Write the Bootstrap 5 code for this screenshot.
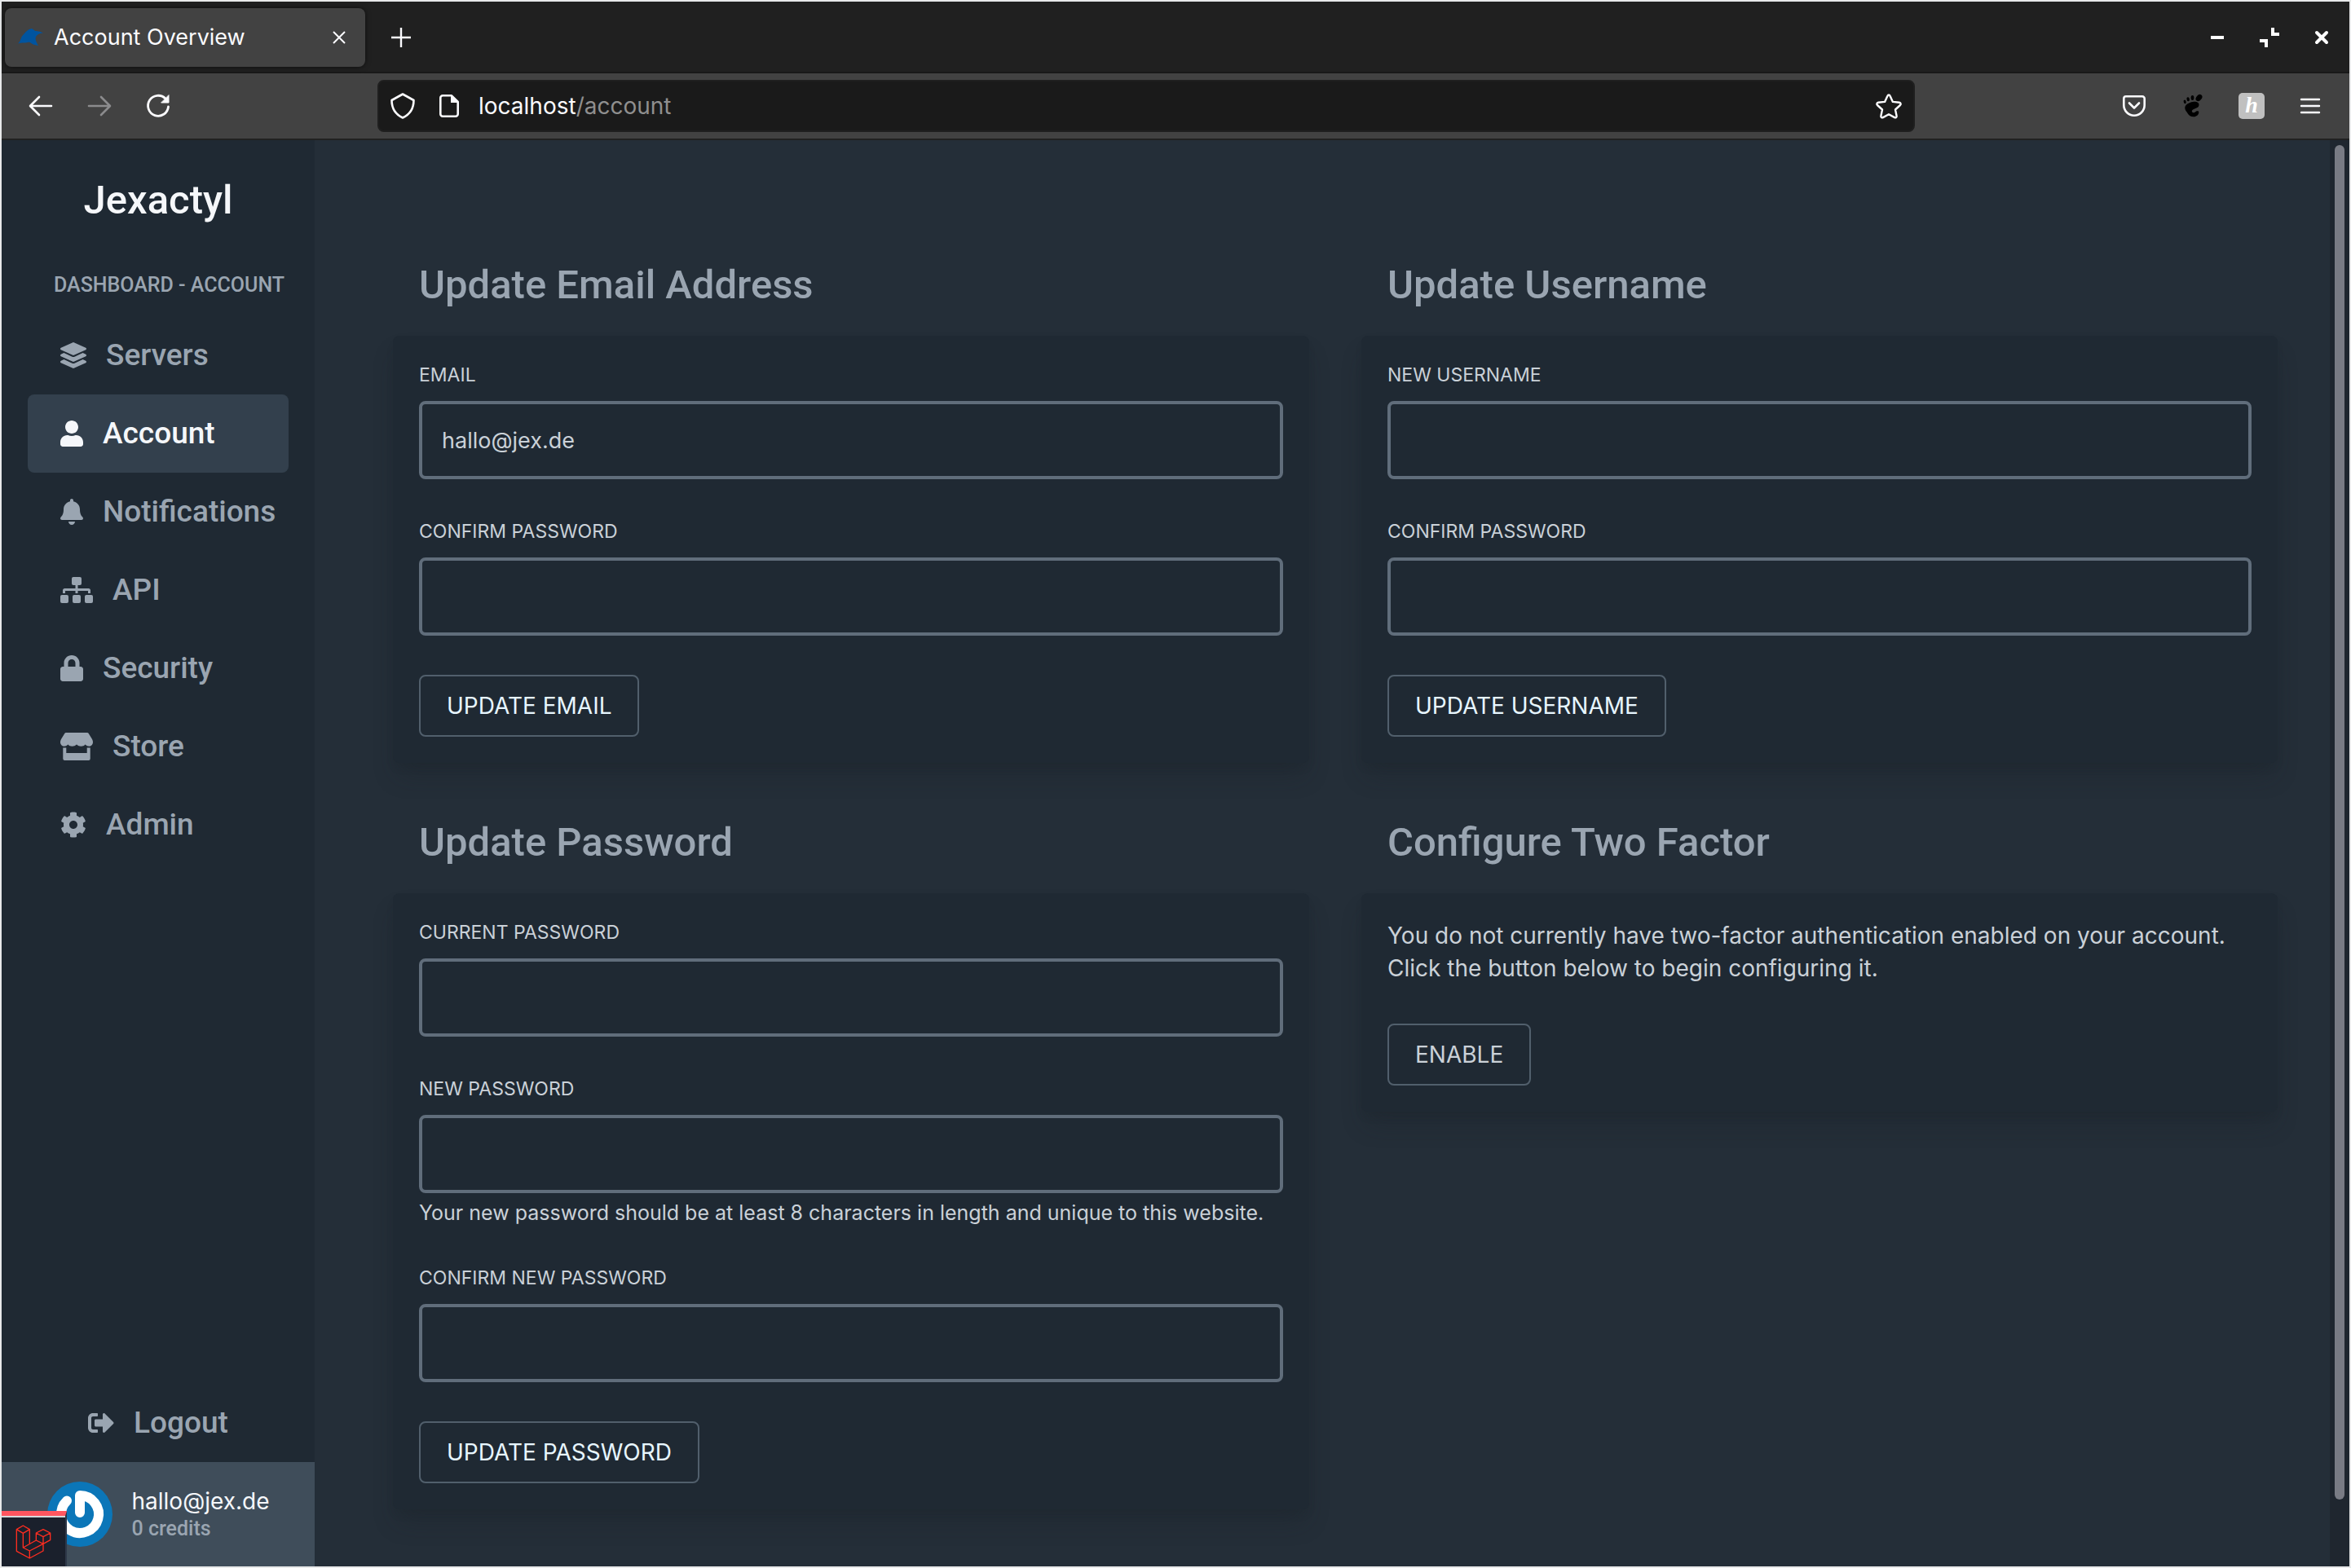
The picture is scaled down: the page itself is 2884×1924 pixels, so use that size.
<!DOCTYPE html>
<html lang="en">
<head>
<meta charset="utf-8">
<meta name="viewport" content="width=device-width, initial-scale=1">
<title>Account Overview</title>
<link href="https://cdn.jsdelivr.net/npm/bootstrap@5.3.0/dist/css/bootstrap.min.css" rel="stylesheet">
<script src="https://cdn.jsdelivr.net/npm/bootstrap@5.3.0/dist/js/bootstrap.bundle.min.js" defer></script>
<style>
:root {
  --ink-900: #1f2933;
  --ink-850: #242e38;
  --ink-700: #33404d;
  --ink-600: #3f4d5a;
  --ink-500: #606d7b;
  --ink-300: #9aa5b1;
  --ink-200: #cad1d8;
  --ink-50: #f5f7fa;
}
body {
  font-family: Inter, "Noto Sans", sans-serif;
  font-size: 28px;
  line-height: 40px;
  color: var(--ink-200);
  background: var(--ink-850);
}
.plex { font-family: Roboto, "Noto Sans", sans-serif; font-weight: 500; }
.window { min-height: 100vh; border: 2px solid #e8e9ea; }
svg { display: block; flex-shrink: 0; overflow: visible; }

/* browser chrome */
.tabstrip { background: #202020; height: 88px; border-bottom: 2px solid #191919; padding: 2px 2px 0 4px; }
.tab { background: #424242; width: 442px; height: 72px; border-radius: 8px; padding: 0 24px 0 16px; box-shadow: 0 0 6px rgba(0,0,0,.6); color: #fbfbfe; font-size: 27px; gap: 12px; }
.chrome-btn { background: none; border: 0; padding: 0; height: 64px; color: #fbfbfe; display: flex; align-items: center; justify-content: center; }
.new-tab { margin-left: 12px; }
.w64 { width: 64px; }
.w72 { width: 72px; }
.toolbar { background: #424242; height: 82px; border-bottom: 2px solid #212121; padding: 0 12px; color: #fbfbfe; }
.urlbar { background: #1a1a1a; height: 64px; border-radius: 8px; margin: 0 233px; padding: 0 14px; border: 2px solid #1f1f1f; font-size: 28px; }
.urlbar .page-icon { margin: 0 24px 0 30px; }
.urlbar .path { color: #8f8f8f; }
.honey { width: 32px; height: 32px; border-radius: 5px; background: #c0c0c0; color: #fff; font: italic bold 28px/30px "Liberation Serif", serif; }

/* sidebar */
.side { background: var(--ink-900); width: 384px; flex-shrink: 0; }
.brand { font-size: 49px; line-height: 64px; color: var(--ink-50); padding-top: 42px; }
.crumb { font-size: 25px; line-height: 32px; color: var(--ink-300); padding: 56px 0 22px 64px; }
.side-nav { padding: 0 32px; }
.side-link { height: 96px; padding: 0 40px; gap: 24px; border-radius: 8px; font-size: 37px; line-height: 48px; color: var(--ink-300); text-decoration: none; white-space: nowrap; }
.side-link:hover, .side-link.active { color: var(--ink-50); }
.side-link.active { background: var(--ink-700); }
.profile { background: var(--ink-600); height: 128px; gap: 24px; }
.profile .mail { font-size: 28px; line-height: 36px; color: var(--ink-50); }
.profile .credits { font-size: 25px; line-height: 32px; color: var(--ink-300); }
.debugbar { left: 0; bottom: 0; width: 80px; height: 68px; background: #1a202c; border-top: 6px solid #ff5660; border-right: 2px solid #2d3748; }
.debugbar span { border-top: 2px solid #d5d8dc; }

/* content */
.page { padding: 144px 64px 68px 96px; }
.grid-cards { --bs-gutter-x: 64px; --bs-gutter-y: 64px; }
.sec-title { font-size: 49px; line-height: 68px; margin: 0 0 28px; padding: 0 32px; color: var(--ink-300); }
.panel { background: var(--ink-900); border-radius: 8px; padding: 32px; box-shadow: 0 20px 30px -6px rgba(25,33,41,.3), 0 8px 12px -4px rgba(25,33,41,.2); }
.field { margin-bottom: 48px; }
.field label { display: block; font-size: 23px; line-height: 32px; margin-bottom: 16px; text-transform: uppercase; }
.field .form-control { height: 96px; border: 4px solid var(--ink-500); border-radius: 8px; background: var(--ink-900); color: var(--ink-200); font-size: 27px; padding: 0 24px; }
.field .form-control:focus { box-shadow: none; border-color: #7b8794; }
.field .hint { font-size: 25px; line-height: 32px; margin: 8px 0 0; }
.panel .btn { height: 76px; padding: 0 32px; border: 2px solid #515f6c; border-radius: 8px; color: #e7f6ff; font-size: 28px; line-height: 40px; text-transform: uppercase; }
.panel .btn.dim { color: var(--ink-200); }

.scroll { background: #1f262f; width: 24px; flex-shrink: 0; padding: 6px 6px 82px; }
.scroll div { background: #797b84; border-radius: 6px; width: 12px; }
</style>
</head>
<body>
<div class="window d-flex flex-column">
  <header>
    <div class="tabstrip d-flex align-items-center">
      <div class="tab d-flex align-items-center">
        <svg width="32" height="22" viewBox="0 0 32 22" fill="#00549f"><path d="M17 0l3 2c1 2 5 0 11 3.500-4 0-7 1.500-9 4.500-1 3 0 6 3 11-3-1-6-1-8-2.500-2-1.500-3-2-5-1.500-4 1-8 0-12 1.500 2-2 3-4 4-7 1-3 3-4 4-5.500C10 4 12 1 17 0z"/></svg>
        <span class="flex-grow-1">Account Overview</span>
        <button class="chrome-btn" type="button" aria-label="Close tab"><svg width="16" height="16" viewBox="0 0 16 16" stroke="currentColor" stroke-width="2"><path d="M1 1l14 14M15 1 1 15"/></svg></button>
      </div>
      <button class="chrome-btn w64 new-tab" type="button" aria-label="New tab"><svg width="24" height="24" viewBox="0 0 24 24" stroke="currentColor" stroke-width="2.4"><path d="M12 0v24M0 12h24"/></svg></button>
      <div class="d-flex ms-auto">
        <button class="chrome-btn w64" type="button" aria-label="Minimize"><svg width="16" height="4" fill="#fff"><path d="M0 0h16v4H0z"/></svg></button>
        <button class="chrome-btn w64" type="button" aria-label="Restore"><svg width="24" height="24" fill="none" stroke="#fff" stroke-width="4"><path d="M16 0v8h8M0 16h8v8"/></svg></button>
        <button class="chrome-btn w64" type="button" aria-label="Close"><svg width="16" height="16" stroke="#fff" stroke-width="4" stroke-linecap="round"><path d="M2 2l12 12M14 2 2 14"/></svg></button>
      </div>
    </div>
    <div class="toolbar d-flex align-items-center">
      <button class="chrome-btn w72" type="button" aria-label="Back"><svg width="28" height="24" fill="none" stroke="currentColor" stroke-width="2.6" stroke-linecap="round" stroke-linejoin="round"><path d="M27 12H2M12 1 1 12l11 11"/></svg></button>
      <button class="chrome-btn w72" type="button" aria-label="Forward" disabled><svg width="28" height="24" fill="none" stroke="#8b8b8d" stroke-width="2.6" stroke-linecap="round" stroke-linejoin="round"><path d="M1 12h25M16 1l11 11-11 11"/></svg></button>
      <button class="chrome-btn w72" type="button" aria-label="Reload"><svg width="28" height="28" fill="none" stroke="currentColor" stroke-width="2.8" stroke-linecap="round"><path d="M23 5A12.500 12.500 0 1 0 26.500 15"/><path d="M27 1v9h-9z" fill="currentColor" stroke-width="1"/></svg></button>
      <div class="urlbar d-flex align-items-center flex-grow-1">
        <svg width="30" height="32" fill="none" stroke="currentColor" stroke-width="2.6" stroke-linejoin="round"><path d="M15 1.500 28.500 9c0 10-4 17-13.500 21.500C5.500 26 1.500 19 1.500 9z"/></svg>
        <svg class="page-icon" width="24" height="28" fill="none" stroke="currentColor" stroke-width="2.6" stroke-linejoin="round"><path d="M4 1.300h11L22.700 9v15a2.700 2.700 0 0 1-2.700 2.700H4A2.700 2.700 0 0 1 1.300 24V4A2.700 2.700 0 0 1 4 1.300z"/><path d="M14 1v9h9z" fill="currentColor" stroke="none"/></svg>
        <span class="flex-grow-1">localhost<span class="path">/account</span></span>
        <svg width="32" height="30" viewBox="0 0 32 30" fill="none" stroke="currentColor" stroke-width="2.4" stroke-linejoin="round"><path d="M16 1.500c.8 0 1.300.5 1.600 1.200l3.300 7.200 8 .9c1.800.2 2.300 2 1.100 3.200l-6 5.500 1.600 7.800c.3 1.600-1.100 2.600-2.500 1.800L16 25.200 8.900 29.100c-1.400.8-2.800-.2-2.500-1.800L8 19.500l-6-5.500c-1.200-1.200-.7-3 1.100-3.200l8-.9 3.300-7.200c.3-.7.8-1.200 1.600-1.200z"/></svg>
      </div>
      <button class="chrome-btn w72" type="button" aria-label="Save to Pocket"><svg width="28" height="26" fill="none" stroke="currentColor" stroke-width="2.6" stroke-linecap="round" stroke-linejoin="round"><path d="M4 1.300h20a2.700 2.700 0 0 1 2.700 2.700v8a12.700 12.700 0 0 1-25.400 0V4A2.700 2.700 0 0 1 4 1.300z"/><path d="M8 9.500l6 6 6-6"/></svg></button>
      <button class="chrome-btn w72" type="button" aria-label="GNOME Shell"><svg width="24" height="28" viewBox="0 0 24 28" fill="#000"><ellipse cx="19.500" cy="4" rx="3.300" ry="4.600" transform="rotate(40 19.500 4)"/><ellipse cx="11.500" cy="4" rx="1.900" ry="3"/><ellipse cx="6.200" cy="5.800" rx="1.700" ry="2.600" transform="rotate(-10 6 6)"/><ellipse cx="2.200" cy="9" rx="1.500" ry="2.400" transform="rotate(-15 2 9)"/><path d="M12 9c4-.6 7.500.5 7.500 3.500 0 3.500-3.500 4-6.500 5.500-2 1-3 2.500-1.500 3.800 1.200 1 2.300.4 3.500-.3 1-1.500 4.500-2 4.300.3C19 25 16.500 27.300 13 27.300c-3.500 0-6-1.500-7.500-4.300C4 20.500 2.500 19.500 2.300 16.500 2.300 12.500 7 9.700 12 9z"/></svg></button>
      <button class="chrome-btn w72" type="button" aria-label="Honey"><span class="honey">h</span></button>
      <button class="chrome-btn w72" type="button" aria-label="Menu"><svg width="24" height="20" stroke="currentColor" stroke-width="2.400" stroke-linecap="round"><path d="M1 2h22M1 10h22M1 18h22"/></svg></button>
    </div>
  </header>

  <div class="d-flex flex-grow-1">
    <aside class="side d-flex flex-column position-relative">
      <div class="brand plex text-center">Jexactyl</div>
      <div class="crumb plex text-nowrap">DASHBOARD - ACCOUNT</div>
      <nav class="side-nav d-flex flex-column">
        <a class="side-link plex d-flex align-items-center" href="#"><svg width="32" height="32" viewBox="0 0 512 512" fill="currentColor"><path d="M12.410 148.020l232.940 105.670c6.800 3.090 14.490 3.090 21.290 0l232.940-105.670c16.550-7.510 16.550-32.520 0-40.030L266.650 2.310a25.607 25.607 0 0 0-21.290 0L12.410 107.980c-16.550 7.510-16.550 32.530 0 40.040zm487.180 88.280l-58.090-26.330-161.640 73.270c-7.560 3.430-15.590 5.170-23.860 5.170s-16.290-1.740-23.860-5.170L70.510 209.970l-58.100 26.330c-16.550 7.500-16.550 32.500 0 40l232.940 105.590c6.800 3.080 14.490 3.080 21.290 0L499.590 276.300c16.550-7.500 16.550-32.500 0-40zm0 127.800l-57.870-26.230-161.860 73.370c-7.560 3.430-15.590 5.170-23.860 5.170s-16.290-1.740-23.860-5.170L70.290 337.870 12.410 364.100c-16.550 7.500-16.550 32.500 0 40l232.940 105.590c6.800 3.080 14.490 3.080 21.290 0L499.590 404.100c16.550-7.500 16.550-32.500 0-40z"/></svg>Servers</a>
        <a class="side-link plex active d-flex align-items-center" href="#" aria-current="page"><svg width="28" height="32" viewBox="0 0 448 512" fill="currentColor"><path d="M224 256c70.700 0 128-57.300 128-128S294.700 0 224 0 96 57.300 96 128s57.300 128 128 128zm89.600 32h-16.700c-22.200 10.200-46.900 16-72.900 16s-50.600-5.800-72.900-16h-16.700C60.200 288 0 348.200 0 422.400V464c0 26.500 21.500 48 48 48h352c26.500 0 48-21.500 48-48v-41.600c0-74.200-60.200-134.400-134.400-134.400z"/></svg>Account</a>
        <a class="side-link plex d-flex align-items-center" href="#"><svg width="28" height="32" viewBox="0 0 448 512" fill="currentColor"><path d="M224 512c35.320 0 63.970-28.650 63.970-64H160.030c0 35.350 28.650 64 63.970 64zm215.390-149.710c-19.320-20.760-55.470-51.990-55.470-154.290 0-77.700-54.480-139.900-127.940-155.160V32c0-17.670-14.320-32-31.980-32s-31.980 14.330-31.980 32v20.840C118.560 68.100 64.080 130.300 64.080 208c0 102.300-36.150 133.530-55.470 154.290-6 6.450-8.660 14.160-8.610 21.710.11 16.400 12.980 32 32.100 32h383.800c19.120 0 32-15.600 32.100-32 .05-7.550-2.610-15.270-8.610-21.710z"/></svg>Notifications</a>
        <a class="side-link plex d-flex align-items-center" href="#"><svg width="40" height="32" viewBox="0 0 40 32" fill="currentColor"><rect x="14" width="12" height="10" rx="2"/><rect y="22" width="10" height="10" rx="2"/><rect x="15" y="22" width="10" height="10" rx="2"/><rect x="30" y="22" width="10" height="10" rx="2"/><path d="M20 9v11M4.500 20v-3.500a1 1 0 0 1 1-1h29a1 1 0 0 1 1 1V20" fill="none" stroke="currentColor" stroke-width="3"/></svg>API</a>
        <a class="side-link plex d-flex align-items-center" href="#"><svg width="28" height="32" viewBox="0 0 448 512" fill="currentColor"><path d="M400 224h-24v-72C376 68.200 307.800 0 224 0S72 68.200 72 152v72H48c-26.500 0-48 21.500-48 48v192c0 26.500 21.500 48 48 48h352c26.500 0 48-21.500 48-48V272c0-26.500-21.500-48-48-48zm-104 0H152v-72c0-39.700 32.300-72 72-72s72 32.300 72 72v72z"/></svg>Security</a>
        <a class="side-link plex d-flex align-items-center" href="#"><svg width="40" height="34" viewBox="0 0 40 34" fill="currentColor"><path d="M7 0h26c.8 0 1.300.3 1.700.9L39 8c2.500 4.500 0 8.500-3.500 8.700-2 0-3.500-.7-4.800-2.200-2.800 3-7.500 3-10.700 0-3.200 3-7.900 3-10.700 0C8 16 6.500 16.700 4.500 16.700 1 16.500-1.500 12.500 1 8L5.300.9C5.700.3 6.200 0 7 0z"/><path d="M3.300 18.500h4V25h25.400v-6.500h4V32a2 2 0 0 1-2 2H5.300a2 2 0 0 1-2-2z"/></svg>Store</a>
        <a class="side-link plex d-flex align-items-center" href="#"><svg width="32" height="32" viewBox="0 0 512 512" fill="currentColor"><path d="M487.400 315.700l-42.600-24.600c4.300-23.200 4.300-47 0-70.200l42.600-24.600c4.900-2.800 7.100-8.600 5.500-14-11.100-35.600-30-67.800-54.700-94.600-3.800-4.100-10-5.100-14.800-2.300L380.800 110c-17.900-15.400-38.500-27.300-60.800-35.100V25.800c0-5.600-3.900-10.500-9.400-11.700-36.700-8.200-74.300-7.800-109.200 0-5.500 1.200-9.400 6.100-9.400 11.700V75c-22.200 7.900-42.800 19.800-60.800 35.100L88.700 85.500c-4.900-2.800-11-1.900-14.800 2.300-24.700 26.700-43.600 58.900-54.700 94.600-1.700 5.400.6 11.200 5.500 14L67.300 221c-4.300 23.200-4.300 47 0 70.200l-42.600 24.600c-4.900 2.800-7.100 8.600-5.500 14 11.100 35.600 30 67.800 54.700 94.600 3.800 4.100 10 5.100 14.800 2.300l42.600-24.600c17.900 15.400 38.500 27.300 60.800 35.100v49.200c0 5.600 3.900 10.500 9.400 11.700 36.700 8.200 74.300 7.800 109.200 0 5.500-1.200 9.400-6.100 9.400-11.700v-49.200c22.200-7.900 42.800-19.800 60.800-35.100l42.600 24.600c4.900 2.800 11 1.900 14.800-2.300 24.700-26.700 43.600-58.900 54.700-94.600 1.500-5.500-.7-11.300-5.600-14.100zM256 336c-44.100 0-80-35.900-80-80s35.900-80 80-80 80 35.900 80 80-35.900 80-80 80z"/></svg>Admin</a>
      </nav>
      <a class="side-link plex d-flex align-items-center justify-content-center mt-auto" href="#"><svg width="32" height="32" viewBox="0 0 512 512" fill="currentColor"><path d="M497 273L329 441c-15 15-41 4.500-41-17v-96H152c-13.300 0-24-10.700-24-24v-96c0-13.300 10.700-24 24-24h136V88c0-21.400 25.900-32 41-17l168 168c9.300 9.400 9.300 24.600 0 34zM192 436v-40c0-6.600-5.400-12-12-12H96c-17.700 0-32-14.300-32-32V160c0-17.700 14.300-32 32-32h84c6.600 0 12-5.400 12-12V76c0-6.600-5.400-12-12-12H96c-53 0-96 43-96 96v192c0 53 43 96 96 96h84c6.600 0 12-5.400 12-12z"/></svg>Logout</a>
      <div class="profile d-flex align-items-center justify-content-center">
        <svg width="80" height="80" viewBox="0 0 80 80" fill="none" stroke="#fff" stroke-width="12" stroke-linecap="round" stroke-linejoin="round"><circle cx="40" cy="40" r="40" fill="#0b76b8" stroke="none"/><path d="M40 38V17a23 23 0 1 1-16 6.500"/></svg>
        <div>
          <div class="mail">hallo@jex.de</div>
          <div class="credits plex">0 credits</div>
        </div>
      </div>
      <div class="debugbar position-absolute d-flex">
        <span class="flex-grow-1 d-flex align-items-center justify-content-center">
          <svg width="42" height="40" viewBox="61 574 126 120" fill="none" stroke="#ff2d20" stroke-width="4" stroke-linejoin="round"><path d="M86 655v-53l24-14-24-14-24 14v80l48 26 50-27v-26l26-14v-26l-26-13-26 13v27zl24 12v27M62 588l24 14M110 588v54M110 667l50-26-26-13M134 601l26 14 26-14M160 615v26"/></svg>
        </span>
      </div>
    </aside>

    <main class="page flex-grow-1">
      <div class="row grid-cards">
        <section class="col-6">
          <h2 class="sec-title plex">Update Email Address</h2>
          <form class="panel">
            <div class="field"><label for="email">Email</label><input class="form-control" id="email" type="email" value="hallo@jex.de"></div>
            <div class="field"><label for="emailPass">Confirm Password</label><input class="form-control" id="emailPass" type="password"></div>
            <button class="btn" type="button">Update Email</button>
          </form>
        </section>
        <section class="col-6">
          <h2 class="sec-title plex">Update Username</h2>
          <form class="panel">
            <div class="field"><label for="user">New Username</label><input class="form-control" id="user" type="text"></div>
            <div class="field"><label for="userPass">Confirm Password</label><input class="form-control" id="userPass" type="password"></div>
            <button class="btn" type="button">Update Username</button>
          </form>
        </section>
        <section class="col-6">
          <h2 class="sec-title plex">Update Password</h2>
          <form class="panel">
            <div class="field"><label for="cur">Current Password</label><input class="form-control" id="cur" type="password"></div>
            <div class="field"><label for="new">New Password</label><input class="form-control" id="new" type="password"><p class="hint">Your new password should be at least 8 characters in length and unique to this website.</p></div>
            <div class="field"><label for="conf">Confirm New Password</label><input class="form-control" id="conf" type="password"></div>
            <button class="btn" type="button">Update Password</button>
          </form>
        </section>
        <section class="col-6">
          <h2 class="sec-title plex">Configure Two Factor</h2>
          <div class="panel">
            <p class="mb-5">You do not currently have two-factor authentication enabled on your account. Click the button below to begin configuring it.</p>
            <button class="btn dim" type="button">Enable</button>
          </div>
        </section>
      </div>
    </main>
    <div class="scroll d-flex"><div></div></div>
  </div>
</div>
</body>
</html>
